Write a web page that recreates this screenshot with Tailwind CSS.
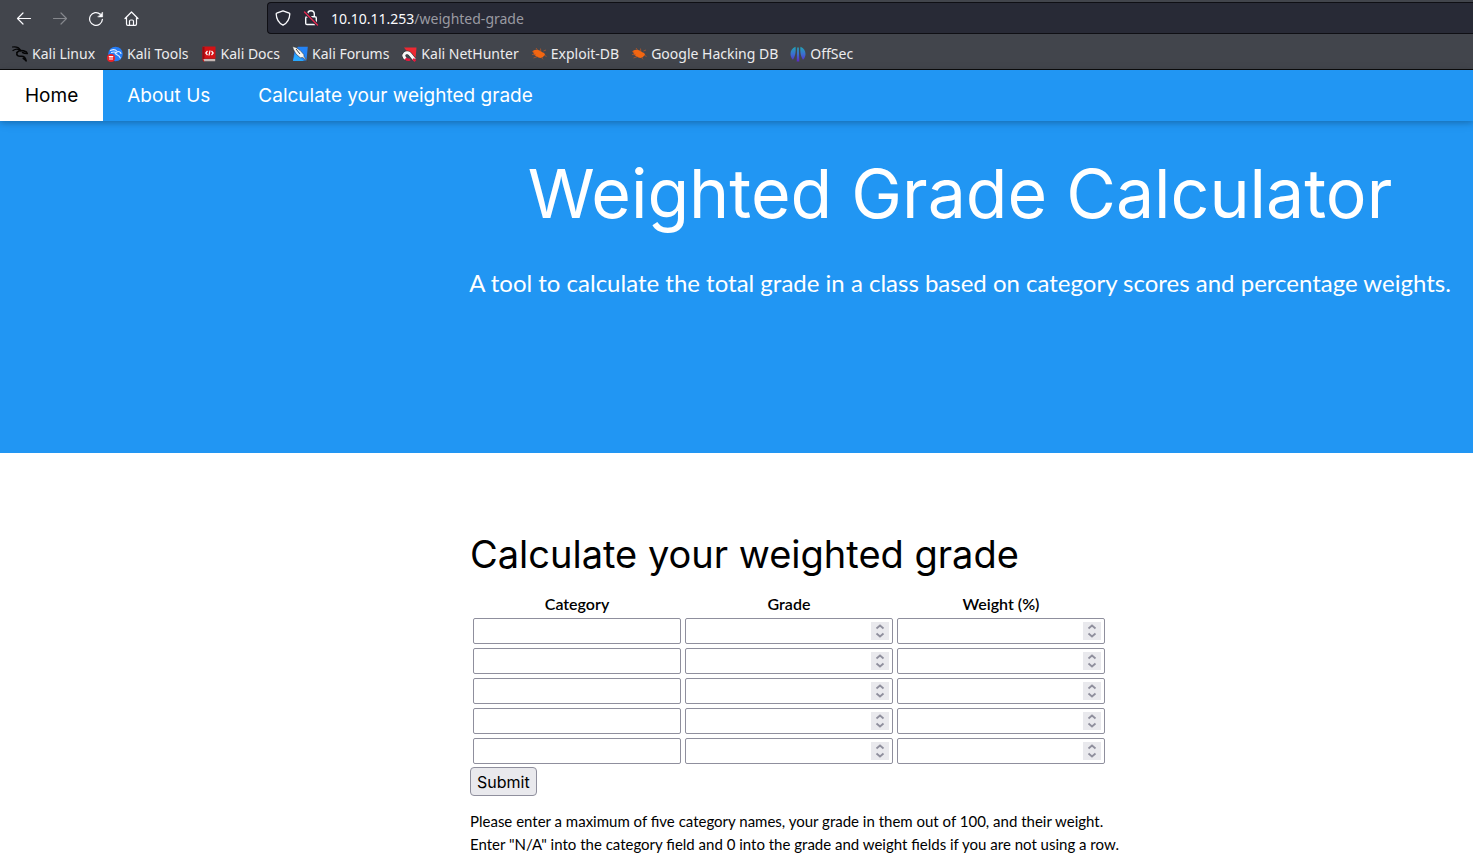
<!DOCTYPE html>
<html lang="en">
<head>
<meta charset="utf-8">
<title>Weighted Grade Calculator</title>
<script src="https://cdn.jsdelivr.net/npm/@tailwindcss/browser@4"></script>
</head>
<body class="bg-white text-black font-['Lato',sans-serif] overflow-x-hidden">

<div class="bg-[#42454c] border-b border-[#0c0c0d] font-['Noto_Sans',sans-serif] text-[#fbfbfe]">
  <div class="flex items-center h-9 pt-1 pb-1">
    <div class="flex items-center gap-5 pl-4 w-[267px] shrink-0">
      <button aria-label="Back" class="size-4"><svg viewBox="0 0 16 16" class="size-4" fill="none" stroke="currentColor" stroke-width="1.2" stroke-linecap="round" stroke-linejoin="round"><path d="M14.5 8.500H1.500M7 3 1.500 8.500 7 14"/></svg></button>
      <button aria-label="Forward" class="size-4 text-[#85878c]"><svg viewBox="0 0 16 16" class="size-4" fill="none" stroke="currentColor" stroke-width="1.2" stroke-linecap="round" stroke-linejoin="round"><path d="M1.500 8.500h13M9 3 14.500 8.500 9 14"/></svg></button>
      <button aria-label="Reload" class="size-4"><svg viewBox="0 0 16 16" class="size-4" fill="none" stroke="currentColor" stroke-width="1.2" stroke-linecap="round"><path d="M12.300 4.200A6.400 6.400 0 1 0 14.400 9.400"/><path d="M14.600 2.400v4.500h-4.500z" fill="currentColor" stroke-width=".6" stroke-linejoin="round"/></svg></button>
      <button aria-label="Home" class="size-4"><svg viewBox="0 0 16 16" class="size-4" fill="none" stroke="currentColor" stroke-width="1.2" stroke-linecap="round" stroke-linejoin="round"><path d="M1 8.500 7.500 2 14 8.500M2.500 7.300v6.700c0 .8.500 1.300 1.300 1.300h7.400c.8 0 1.300-.5 1.300-1.300V7.300"/><path d="M5.500 15v-3.700c0-.8.500-1.300 1.300-1.300h1.400c.8 0 1.300.500 1.300 1.300V15"/></svg></button>
    </div>
    <div class="flex-1 flex items-center h-8 bg-[#282a36] border border-r-0 border-[#0f0f14] rounded-l-sm pl-[7px] gap-3">
      <svg viewBox="0 0 16 16" class="size-4 shrink-0" fill="none" stroke="currentColor" stroke-width="1.3" stroke-linejoin="round"><path d="M8 .8 14.300 3.200c.3.1.5.4.5.8C14.600 9 12.300 13 8 15.200 3.700 13 1.400 9 1.200 4c0-.4.2-.7.5-.8z"/></svg>
      <svg viewBox="0 0 16 16" class="size-4 shrink-0" fill="none" stroke="currentColor" stroke-width="1.4" stroke-linecap="round" stroke-linejoin="round"><path d="M4.700 6.500V4a3.300 3.300 0 0 1 6.600 0v2.500M4 6.700h8c.8 0 1.300.5 1.300 1.300v5.200c0 .8-.5 1.300-1.300 1.300H4c-.8 0-1.300-.5-1.300-1.300V8c0-.8.5-1.300 1.300-1.300z"/><path d="M1.500 2 14.500 15" stroke="#282a36" stroke-width="3.200"/><path d="M1.500 2 14.500 15" stroke="#e22850" stroke-width="1.400"/></svg>
      <div class="text-[14px] leading-5 pt-px whitespace-nowrap">10.10.11.253<span class="text-[#9a9aa2]">/weighted-grade</span></div>
    </div>
  </div>
  <nav aria-label="Bookmarks" class="flex items-center gap-3 h-[33px] pl-3 pt-0.5 text-[14px] leading-5 text-[#ececee] whitespace-nowrap">
    <a href="#" class="flex items-center gap-1"><svg viewBox="0 0 16 16" class="size-4" fill="none" stroke="#050506" stroke-linecap="round" stroke-linejoin="round"><path d="M.5 1C4 .5 7 1.500 8.500 4M1 4.500C4 2.500 7 3 9 5" stroke-width="1.200"/><path d="M5 6.500C4 9.500 6.500 10.500 9 10.200c3-.2 4.500 1 5.200 4.800-1-1-1.500-2-3-2.500" stroke-width="1.500"/><path d="M5 6.500c1.500-2 4-2.500 6.500-1.700L14.500 6l.8 1.500-2.800-.3-2-.7" stroke-width="1.500"/></svg>Kali Linux</a>
    <a href="#" class="flex items-center gap-1"><svg viewBox="0 0 16 16" class="size-4"><circle cx="8.500" cy="8" r="7.300" fill="#257cf5"/><path d="M3.500 4.500c3-1.500 5-1 6.500.8 2 .2 3.500.8 4 2.200M4.500 6.500c2-.8 4-.5 5.500.3M8 6.500c-.5 2.500 4 2 5.300 5.500" fill="none" stroke="#d8eaff" stroke-width="1.100" stroke-linecap="round"/><circle cx="4" cy="12" r="4" fill="#e82228"/><path d="M1.800 10.500h4.400M3 10.500v3.500M5 10.500v3.500" stroke="#fff" stroke-width="1"/></svg>Kali Tools</a>
    <a href="#" class="flex items-center gap-1"><svg viewBox="0 0 16 16" class="size-4"><path d="M2 .5h12.500v12.300H4v2.700H2.500L1.500 14V1z" fill="#d41215"/><path d="M1.500 1h2v12h-2z" fill="#980d11"/><path d="M2.500 13h11.700v2.300H3.200z" fill="#c5b8b5"/><path d="M6.500 5 4.800 7l1.700 2M10.500 5l1.700 2-1.700 2M9 4.500 8 9.500" fill="none" stroke="#fff" stroke-width="1.200"/></svg>Kali Docs</a>
    <a href="#" class="flex items-center gap-1"><svg viewBox="0 0 16 16" class="size-4"><path d="M1 15 2.500 5 6 .8h9.800L14.500 14.500z" fill="#2484f7"/><path d="M1 15 3 8l9 7z" fill="#28a8ff"/><path d="M.5.5 4 1.500l4 2.800 3.800 4.200.2 2 3.500 4.700-4.700-3.700-2.500.2L4 8 1.500 3.500z" fill="#f7f7f3" stroke="#292e33" stroke-width=".5"/><path d="m4 3 4 5" stroke="#49433c"/></svg>Kali Forums</a>
    <a href="#" class="flex items-center gap-1"><svg viewBox="0 0 16 16" class="size-4"><path d="M3 1.500h12.500L14.500 13 8 8z" fill="#ed2932"/><path d="M13.500 13.800 9.300 8.500C8 6.700 5.500 6 3.800 7.500 2 9.200 3 12 5 12.700" fill="none" stroke="#242426" stroke-width="4"/><path d="M13.500 13.800 9.500 8.700C8 6.700 5.500 6 3.800 7.500 2 9.200 3 12 5 12.700" fill="none" stroke="#f9f7f7" stroke-width="3"/><path d="M4.500 12.500c1.500 1.500 3 1.700 4.500.7M12 13l2.500 2" fill="none" stroke="#e3193d" stroke-width="2.500"/></svg>Kali NetHunter</a>
    <a href="#" class="flex items-center gap-1"><svg viewBox="0 0 16 16" class="size-4"><path d="M2 4.800c3-2 7-1 9.200 1.400 1.300.2 2.500 1 3 2.300l-1.400 1.500c-1 2-3.200 2.300-5.300 1.500C4.500 10.500 2 8 2 4.800z" fill="#f26611"/><path d="M1 5.300 3.500 7M1 8.500l4 .3M2.500 12l4-1.500M5 2l1.500 2M9.500 2.500l.3 3M12.500 5l2.500-1M10 11l2 2.300M13 9l2.500 1.500" stroke="#b85525" stroke-width=".8"/></svg>Exploit-DB</a>
    <a href="#" class="flex items-center gap-1"><svg viewBox="0 0 16 16" class="size-4"><path d="M2 4.800c3-2 7-1 9.200 1.400 1.300.2 2.500 1 3 2.300l-1.400 1.500c-1 2-3.200 2.300-5.300 1.500C4.500 10.500 2 8 2 4.800z" fill="#f26611"/><path d="M1 5.300 3.500 7M1 8.500l4 .3M2.500 12l4-1.500M5 2l1.500 2M9.500 2.500l.3 3M12.500 5l2.500-1M10 11l2 2.300M13 9l2.500 1.500" stroke="#b85525" stroke-width=".8"/></svg>Google Hacking DB</a>
    <a href="#" class="flex items-center gap-1"><svg viewBox="0 0 16 16" class="size-4"><defs><linearGradient id="os" x1="0" y1="0" x2="0" y2="1"><stop offset="0" stop-color="#20a5b5"/><stop offset=".5" stop-color="#3b6ed0"/><stop offset="1" stop-color="#5a27c5"/></linearGradient></defs><path d="M5.500.8C2 2 .5 5 .5 8c0 2.500 1 4.500 2.500 5.800C5 11 6.200 6 5.500.8zM7.200 1.500h1.600L9.300 15.500H6.700zM10.500.8C14 2 15.500 5 15.500 8c0 2.500-1 4.500-2.500 5.800C11 11 9.800 6 10.500.8z" fill="url(#os)"/></svg>OffSec</a>
  </nav>
</div>

<nav aria-label="Main" class="relative flex bg-[#2196f3] text-white font-['Inter',sans-serif] text-[19px] leading-[27px] shadow-[0_2px_5px_0_rgba(0,0,0,0.16),0_2px_10px_0_rgba(0,0,0,0.12)]">
  <a href="#" class="px-[25px] py-3 bg-white text-black">Home</a>
  <a href="#" class="px-6 py-3">About Us</a>
  <a href="#" class="px-6 py-3">Calculate your weighted grade</a>
</nav>

<header class="bg-[#2196f3] text-white text-center pt-6 pb-[152px] pl-[447px]">
  <h1 class="font-['Inter',sans-serif] text-[68px] leading-[96px] whitespace-nowrap">Weighted Grade Calculator</h1>
  <p class="mt-6 text-[24px] leading-[36px] whitespace-nowrap">A tool to calculate the total grade in a class based on category scores and percentage weights.</p>
</header>

<main class="pl-[470px] pt-[74px]">
  <h2 class="font-['Inter',sans-serif] text-[38px] leading-[54px] whitespace-nowrap">Calculate your weighted grade</h2>
  <form class="mt-2">
    <table class="-ml-px -mb-px border-separate border-spacing-x-1 border-spacing-y-1 text-[15px] leading-[23px]">
      <thead class="text-[16px] leading-[21px]"><tr><th class="p-0 font-semibold">Category</th><th class="p-0 font-semibold">Grade</th><th class="p-0 font-semibold">Weight (%)</th></tr></thead>
      <tbody id="rows"></tbody>
    </table>
    <button type="button" class="block h-[29px] px-[6px] bg-[#e9e9ed] border border-[#8f8f9d] rounded font-['Inter',sans-serif] text-[16px] leading-5">Submit</button>
  </form>
  <p class="mt-[14px] text-[15px] leading-[23px] whitespace-nowrap">Please enter a maximum of five category names, your grade in them out of 100, and their weight.<br>Enter "N/A" into the category field and 0 into the grade and weight fields if you are not using a row.</p>
</main>

<script>
const number = label => `<td class="p-0"><div class="flex items-center w-52 h-[26px] border border-[#8f8f9d] rounded-xs pr-[3px]">
  <input type="number" aria-label="${label}" class="flex-1 min-w-0 h-full px-1 outline-none [appearance:textfield]">
  <svg aria-hidden="true" viewBox="0 0 18 18" class="w-[18px] h-[18px] bg-[#e9e9ed]" fill="none" stroke="#8f8f9d" stroke-width="1.800"><path d="M5.500 6.500 9 3.500l3.500 3M5.500 11.500 9 14.500l3.500-3"/></svg></div></td>`;
document.getElementById('rows').innerHTML = [1, 2, 3, 4, 5].map(n =>
  `<tr><td class="p-0"><input type="text" aria-label="Category ${n}" class="block w-52 h-[26px] px-1 border border-[#8f8f9d] rounded-xs"></td>${number('Grade ' + n)}${number('Weight ' + n)}</tr>`).join('');
</script>
</body>
</html>
